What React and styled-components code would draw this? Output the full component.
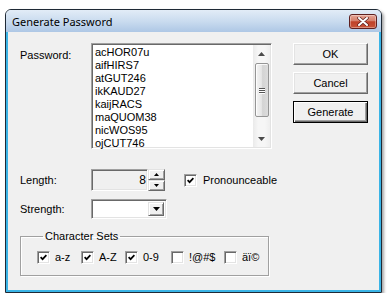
import React from 'react';
import styled, { createGlobalStyle } from 'styled-components';

const GlobalStyle = createGlobalStyle`
    body {
        margin: 0;
        background: #ffffff;
        font-family: "Liberation Sans", Arial, sans-serif;
        font-size: 11px;
        color: #000;
    }
`;

const Window = styled.div`
    margin: 9px 0 0 5px;
    width: 377px;
    height: 284px;
    box-sizing: border-box;
    border: 1px solid #1f2a36;
    border-radius: 6px 6px 0 0;
    display: flex;
    flex-direction: column;
    background: linear-gradient(#e4edf8, #b6cde8 28px, #b6cde8);
    box-shadow: 2px 2px 3px rgba(0, 0, 0, 0.35);
    overflow: hidden;
`;

const TitleBar = styled.div`
    height: 22px;
    display: flex;
    align-items: center;
    justify-content: space-between;
    padding: 0 4px 0 6px;
    background: linear-gradient(#e2ecf7, #cadcef 50%, #aec7e5);
`;

const Title = styled.span`
    font-family: "Noto Sans", "Liberation Sans", sans-serif;
    font-size: 11px;
    color: #000;
`;

const CloseButton = styled.div`
    width: 28px;
    height: 15px;
    box-sizing: border-box;
    border: 1px solid #5e2020;
    border-radius: 3px;
    display: flex;
    align-items: center;
    justify-content: center;
    background: linear-gradient(#e6a596, #d5806c 45%, #bf4129 52%, #c85438);
    box-shadow: inset 0 0 0 1px rgba(255, 255, 255, 0.35);
`;

const Client = styled.div`
    flex: 1;
    display: flex;
    gap: 21px;
    padding: 11px 0 0 12px;
    background: #f0f0f0;
    border: 2px solid #3ab4e6;
    border-top: none;
`;

const LeftPane = styled.div`
    width: 252px;
    display: flex;
    flex-direction: column;
`;

const FieldRow = styled.div`
    display: flex;
    align-items: ${(p) => (p.$top ? 'flex-start' : 'center')};
    margin-top: ${(p) => p.$mt || 0}px;
`;

const Label = styled.div`
    width: 71px;
    flex-shrink: 0;
    line-height: 13px;
    padding-top: ${(p) => p.$pt || 0}px;
`;

const ListBox = styled.div`
    width: 181px;
    height: 106px;
    box-sizing: border-box;
    display: flex;
    background: #fff;
    border: 1px solid;
    border-color: #a0a0a0 #fff #fff #a0a0a0;
    box-shadow: inset 1px 1px #696969, inset -1px -1px #e3e3e3;
    padding: 1px;
`;

const Items = styled.div`
    flex: 1;
    padding: 1px 0 0 2px;
`;

const Item = styled.div`
    line-height: 13px;
    height: 13px;
`;

const ScrollBar = styled.div`
    width: 17px;
    display: flex;
    flex-direction: column;
    background: linear-gradient(90deg, #eaeaea, #f6f6f6 30%, #f6f6f6 70%, #eeeeee);
`;

const ScrollArrow = styled.div`
    height: 17px;
    display: flex;
    align-items: center;
    justify-content: center;
`;

const Track = styled.div`
    flex: 1;
    padding: 1px 1px 11px 2px;
    display: flex;
    flex-direction: column;
`;

const Thumb = styled.div`
    height: 54px;
    box-sizing: border-box;
    border: 1px solid #959595;
    border-radius: 2px;
    background: linear-gradient(90deg, #f4f4f4, #e6e6e6 45%, #d4d4d4 55%, #dcdcdc);
    box-shadow: inset 1px 1px rgba(255, 255, 255, 0.8);
    display: flex;
    flex-direction: column;
    align-items: center;
    justify-content: center;
    gap: 1px;
`;

const Grip = styled.div`
    width: 6px;
    height: 1px;
    background: #555;
    box-shadow: 0 1px #fff;
`;

const ButtonColumn = styled.div`
    display: flex;
    flex-direction: column;
    gap: 7px;
`;

const Button = styled.div`
    width: 75px;
    height: 22px;
    box-sizing: border-box;
    display: flex;
    align-items: center;
    justify-content: center;
    background: #f0f0f0;
    border: 1px solid;
    border-color: ${(p) => (p.$default ? '#000' : '#fff #696969 #696969 #fff')};
    box-shadow: ${(p) =>
        p.$default
            ? 'inset 1px 1px #fff, inset -1px -1px #696969, inset -2px -2px #a0a0a0'
            : 'inset -1px -1px #a0a0a0, inset 1px 1px #e3e3e3'};
`;

const Sunken = styled.div`
    box-sizing: border-box;
    border: 1px solid;
    border-color: #a0a0a0 #fff #fff #a0a0a0;
    box-shadow: inset 1px 1px #696969, inset -1px -1px #e3e3e3;
`;

const SpinEdit = styled.div`
    display: flex;
    height: 22px;
`;

const EditBox = styled(Sunken)`
    width: 57px;
    height: 22px;
    background: #f0f0f0;
    display: flex;
    align-items: center;
    justify-content: flex-end;
    padding-right: 1px;
    font-size: 12px;
`;

const SpinButtons = styled.div`
    width: 17px;
    display: flex;
    flex-direction: column;
`;

const Raised = styled.div`
    box-sizing: border-box;
    display: flex;
    align-items: center;
    justify-content: center;
    background: #f0f0f0;
    border: 1px solid;
    border-color: #e3e3e3 #696969 #696969 #e3e3e3;
    box-shadow: inset 1px 1px #fff, inset -1px -1px #a0a0a0;
`;

const SpinButton = styled(Raised)`
    height: 11px;
`;

const Combo = styled(Sunken)`
    width: 76px;
    height: 20px;
    background: #fff;
    display: flex;
    justify-content: flex-end;
    padding: 2px;
`;

const DropButton = styled(Raised)`
    width: 16px;
`;

const CheckItem = styled.div`
    display: flex;
    align-items: center;
    gap: ${(p) => p.$gap || 5}px;
    width: ${(p) => (p.$w ? `${p.$w}px` : 'auto')};
    margin-left: ${(p) => p.$ml || 0}px;
    flex-shrink: 0;
    line-height: 13px;
`;

const Box = styled(Sunken)`
    width: 13px;
    height: 13px;
    background: #fff;
    display: flex;
    align-items: center;
    justify-content: center;
`;

const GroupBox = styled.fieldset`
    margin: 11px 0 0 0;
    width: 249px;
    box-sizing: border-box;
    min-width: 0;
    border: 1px solid #a0a0a0;
    box-shadow: inset 1px 1px #fff, 1px 1px #fff;
    padding: 8px 0 11px 16px;
    display: flex;
`;

const Legend = styled.legend`
    margin-left: 6px;
    padding: 0 2px;
    line-height: 13px;
`;

const Arrow = ({ up, size = 5, color = '#000' }) => (
    <svg width={size} height={Math.ceil(size / 2)} viewBox={`0 0 ${size} ${Math.ceil(size / 2)}`}>
        <polygon
            points={
                up
                    ? `0,${Math.ceil(size / 2)} ${size},${Math.ceil(size / 2)} ${size / 2},0`
                    : `0,0 ${size},0 ${size / 2},${Math.ceil(size / 2)}`
            }
            fill={color}
        />
    </svg>
);

const Check = () => (
    <svg width="7" height="7" viewBox="0 0 7 7">
        <path d="M0.6 3.2 L2.6 5.2 L6.4 1.2" stroke="#000" strokeWidth="1.7" fill="none" />
    </svg>
);

const CheckBox = ({ label, checked, w, ml, gap }) => (
    <CheckItem $w={w} $ml={ml} $gap={gap}>
        <Box>{checked && <Check />}</Box>
        <span>{label}</span>
    </CheckItem>
);

const passwords = ['acHOR07u', 'aifHIRS7', 'atGUT246', 'ikKAUD27', 'kaijRACS', 'maQUOM38', 'nicWOS95', 'ojCUT746'];

const charSets = [
    { label: 'a-z', checked: true, w: 44 },
    { label: 'A-Z', checked: true, w: 44 },
    { label: '0-9', checked: true, w: 46 },
    { label: '!@#$', checked: false, w: 53 },
    { label: 'äï©', checked: false },
];

const App = () => {
    return (
        <>
            <GlobalStyle />
            <Window>
                <TitleBar>
                    <Title>Generate Password</Title>
                    <CloseButton>
                        <svg width="12" height="9" viewBox="0 0 12 9">
                            <path d="M2 1 L10 8 M10 1 L2 8" stroke="#5a1e1e" strokeWidth="3.4" strokeLinecap="round" />
                            <path d="M2 1 L10 8 M10 1 L2 8" stroke="#fff" strokeWidth="2" strokeLinecap="round" />
                        </svg>
                    </CloseButton>
                </TitleBar>
                <Client>
                    <LeftPane>
                        <FieldRow $top>
                            <Label $pt={6}>Password:</Label>
                            <ListBox>
                                <Items>
                                    {passwords.map((p) => (
                                        <Item key={p}>{p}</Item>
                                    ))}
                                </Items>
                                <ScrollBar>
                                    <ScrollArrow>
                                        <Arrow up size={7} color="#4a4a4a" />
                                    </ScrollArrow>
                                    <Track>
                                        <Thumb>
                                            <Grip />
                                            <Grip />
                                            <Grip />
                                        </Thumb>
                                    </Track>
                                    <ScrollArrow>
                                        <Arrow size={7} color="#4a4a4a" />
                                    </ScrollArrow>
                                </ScrollBar>
                            </ListBox>
                        </FieldRow>

                        <FieldRow $mt={20}>
                            <Label>Length:</Label>
                            <SpinEdit>
                                <EditBox>8</EditBox>
                                <SpinButtons>
                                    <SpinButton>
                                        <Arrow up size={5} />
                                    </SpinButton>
                                    <SpinButton>
                                        <Arrow size={5} />
                                    </SpinButton>
                                </SpinButtons>
                            </SpinEdit>
                            <CheckBox label="Pronounceable" checked ml={19} gap={6} />
                        </FieldRow>

                        <FieldRow $mt={8}>
                            <Label>Strength:</Label>
                            <Combo>
                                <DropButton>
                                    <Arrow size={7} />
                                </DropButton>
                            </Combo>
                        </FieldRow>

                        <GroupBox>
                            <Legend>Character Sets</Legend>
                            {charSets.map((c) => (
                                <CheckBox key={c.label} label={c.label} checked={c.checked} w={c.w} />
                            ))}
                        </GroupBox>
                    </LeftPane>

                    <ButtonColumn>
                        <Button>OK</Button>
                        <Button>Cancel</Button>
                        <Button $default>Generate</Button>
                    </ButtonColumn>
                </Client>
            </Window>
        </>
    );
};

export default App;
